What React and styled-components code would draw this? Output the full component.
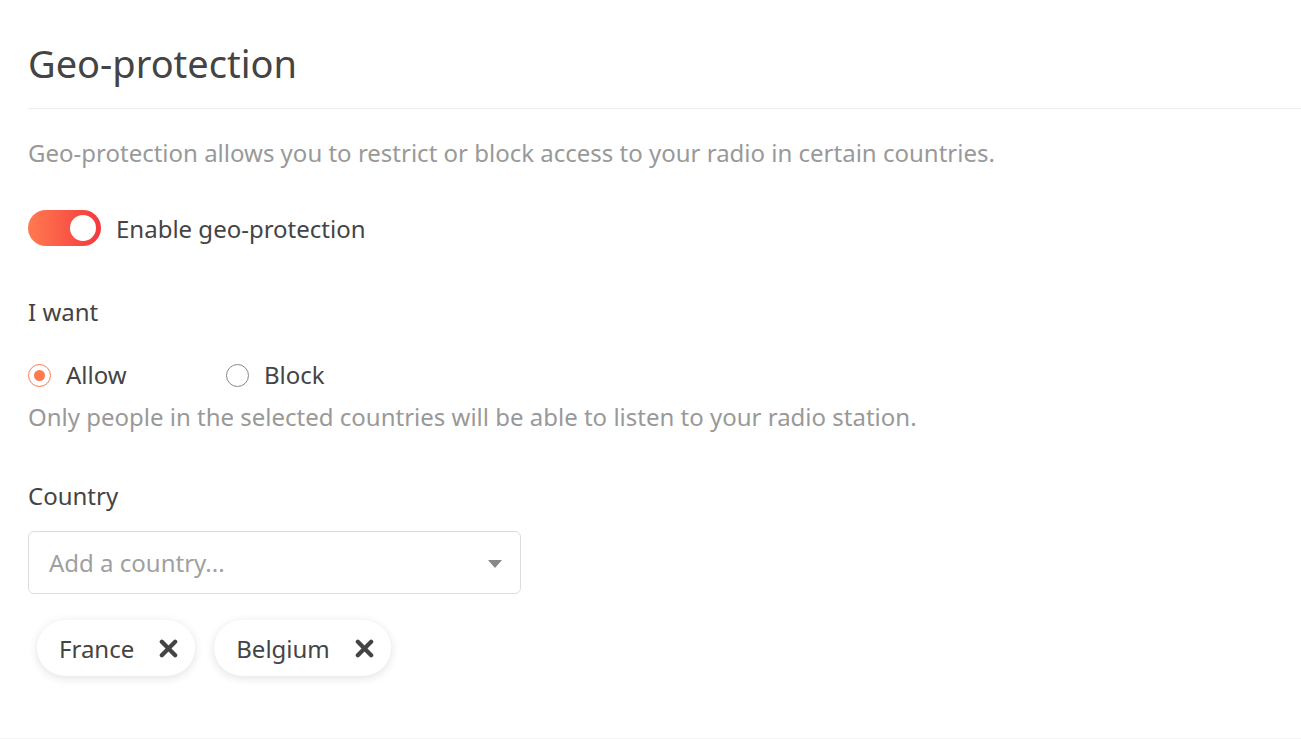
import React, { useState } from "react";
import styled, { createGlobalStyle } from "styled-components";

const GlobalStyle = createGlobalStyle`
  html, body {
    margin: 0;
    padding: 0;
    background: #ffffff;
  }
  body {
    font-family: "Noto Sans", "Open Sans", sans-serif;
    color: #444444;
  }
`;

const Page = styled.div`
  min-height: 739px;
  border-bottom: 1px solid #f2f2f2;
  padding-left: 28px;
  box-sizing: border-box;
`;

const Title = styled.h1`
  margin: 0;
  padding: 37px 0 19px;
  font-size: 38px;
  font-weight: 400;
  color: #444444;
  line-height: 52px;
  border-bottom: 1px solid #ececec;
`;

const Description = styled.p`
  margin: 28px 0 0;
  font-size: 24px;
  line-height: 32px;
  color: #999999;
`;

const ToggleRow = styled.label`
  display: flex;
  align-items: center;
  gap: 15px;
  margin-top: 41px;
  font-size: 24px;
  color: #444444;
  cursor: pointer;
`;

const Switch = styled.span`
  position: relative;
  width: 73px;
  height: 36px;
  border-radius: 18px;
  background: ${(p) => (p.$on ? "linear-gradient(90deg, #ff7a4f, #f5383f)" : "#dddddd")};
  flex-shrink: 0;
`;

const Knob = styled.span`
  position: absolute;
  top: 5px;
  left: ${(p) => (p.$on ? "42px" : "5px")};
  width: 26px;
  height: 26px;
  border-radius: 50%;
  background: #ffffff;
`;

const SectionLabel = styled.div`
  margin-top: ${(p) => p.$top}px;
  font-size: 24px;
  line-height: 32px;
  color: #444444;
`;

const RadioGroup = styled.div`
  display: flex;
  margin-top: 31px;
`;

const RadioOption = styled.label`
  display: flex;
  align-items: center;
  gap: 15px;
  width: 198px;
  font-size: 24px;
  line-height: 32px;
  color: #444444;
  cursor: pointer;
`;

const RadioCircle = styled.span`
  width: 21px;
  height: 21px;
  border-radius: 50%;
  border: 1px solid ${(p) => (p.$checked ? "#ff7a4f" : "#888888")};
  display: flex;
  align-items: center;
  justify-content: center;
  flex-shrink: 0;

  &::after {
    content: "";
    width: 11px;
    height: 11px;
    border-radius: 50%;
    background: ${(p) => (p.$checked ? "#ff7a4f" : "transparent")};
  }
`;

const Hint = styled.p`
  margin: 10px 0 0;
  font-size: 24px;
  line-height: 32px;
  color: #999999;
`;

const Select = styled.div`
  margin-top: 19px;
  width: 493px;
  height: 63px;
  box-sizing: border-box;
  border: 1px solid #dcdcdc;
  border-radius: 6px;
  display: flex;
  align-items: center;
  justify-content: space-between;
  padding: 0 18px 0 20px;
  font-size: 24px;
  color: #a0a0a0;
`;

const Caret = styled.span`
  width: 0;
  height: 0;
  border-left: 7px solid transparent;
  border-right: 7px solid transparent;
  border-top: 8px solid #888888;
  margin-top: 3px;
`;

const Chips = styled.div`
  display: flex;
  gap: 19px;
  margin-top: 26px;
  padding-left: 9px;
`;

const Chip = styled.div`
  display: flex;
  align-items: center;
  gap: 25px;
  height: 56px;
  padding: 0 17px 0 22px;
  border-radius: 28px;
  background: #ffffff;
  box-shadow: 0 2px 10px rgba(0, 0, 0, 0.12);
  font-size: 24px;
  color: #444444;
`;

const RemoveButton = styled.button`
  border: none;
  background: none;
  padding: 0;
  display: flex;
  cursor: pointer;
`;

const CrossIcon = () => (
  <svg width="19" height="19" viewBox="0 0 20 20">
    <path d="M3 3 L17 17 M17 3 L3 17" stroke="#444444" strokeWidth="4.5" strokeLinecap="round" />
  </svg>
);

export default function App() {
  const [enabled, setEnabled] = useState(true);
  const [mode, setMode] = useState("allow");
  const [countries, setCountries] = useState(["France", "Belgium"]);

  return (
    <>
      <GlobalStyle />
      <Page>
        <Title>Geo-protection</Title>
        <Description>
          Geo-protection allows you to restrict or block access to your radio in certain countries.
        </Description>
        <ToggleRow onClick={() => setEnabled(!enabled)}>
          <Switch $on={enabled}>
            <Knob $on={enabled} />
          </Switch>
          Enable geo-protection
        </ToggleRow>
        <SectionLabel $top={50}>I want</SectionLabel>
        <RadioGroup>
          <RadioOption onClick={() => setMode("allow")}>
            <RadioCircle $checked={mode === "allow"} />
            Allow
          </RadioOption>
          <RadioOption onClick={() => setMode("block")}>
            <RadioCircle $checked={mode === "block"} />
            Block
          </RadioOption>
        </RadioGroup>
        <Hint>Only people in the selected countries will be able to listen to your radio station.</Hint>
        <SectionLabel $top={47}>Country</SectionLabel>
        <Select>
          Add a country...
          <Caret />
        </Select>
        <Chips>
          {countries.map((c) => (
            <Chip key={c}>
              {c}
              <RemoveButton onClick={() => setCountries(countries.filter((x) => x !== c))}>
                <CrossIcon />
              </RemoveButton>
            </Chip>
          ))}
        </Chips>
      </Page>
    </>
  );
}
